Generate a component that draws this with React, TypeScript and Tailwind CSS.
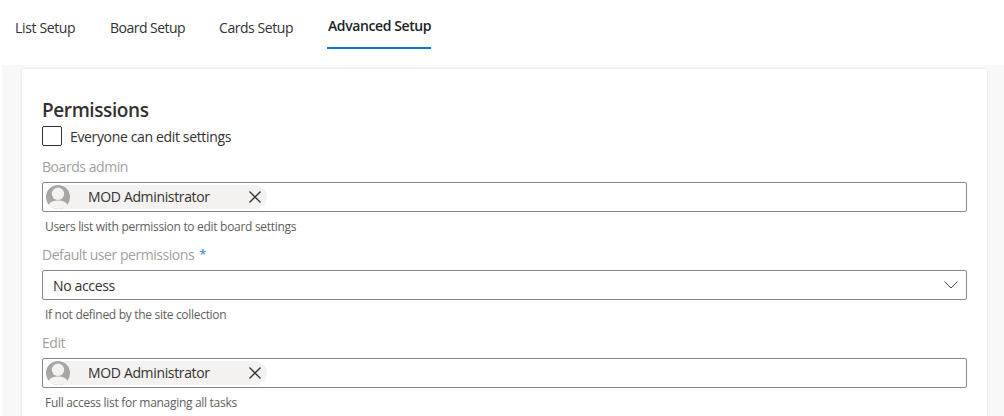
import React from "react";

const font = { fontFamily: '"Open Sans", "Noto Sans", sans-serif' };

function Avatar() {
  return (
    <svg width="24" height="24" viewBox="0 0 24 24" className="shrink-0">
      <circle cx="12" cy="12" r="12" fill="#a8a6a4" />
      <circle cx="12" cy="8.8" r="6.2" fill="#f3f2f1" />
      <path d="M2.6 20 C4 16.5 8 15.5 12 15.5 C16 15.5 20 16.5 21.4 20 C19.2 22.5 15.8 24 12 24 C8.2 24 4.8 22.5 2.6 20 Z" fill="#f3f2f1" />
    </svg>
  );
}

function Persona() {
  return (
    <div className="flex h-6 w-[221px] items-center rounded-full bg-[#f3f2f1]">
      <Avatar />
      <span className="ml-[18px] w-[161px] whitespace-nowrap pb-[2px] text-[14px] tracking-[-0.35px] text-[#323130]">MOD Administrator</span>
      <svg width="12" height="12" viewBox="0 0 12 12" className="shrink-0" fill="none" stroke="#323130" strokeWidth="1.3">
        <path d="M0.5 0.5 L11.5 11.5 M11.5 0.5 L0.5 11.5" />
      </svg>
    </div>
  );
}

function Label({ children, required }: { children: React.ReactNode; required?: boolean }) {
  return (
    <div className="flex h-[30px] items-center pb-[1px] text-[14px] tracking-[-0.45px] text-[#a19f9d]">
      {children}
      {required && <span className="ml-[5px] text-[13px] text-[#2f7fd0]">*</span>}
    </div>
  );
}

function Hint({ children }: { children: React.ReactNode }) {
  return (
    <div className="flex h-[28px] items-center pl-[3px] pt-[1px] text-[12px] tracking-[-0.3px] text-[#605e5c]">{children}</div>
  );
}

function PeopleField() {
  return (
    <div className="flex h-[30px] items-center rounded-[2px] border border-[#8a8886] pl-[3px]">
      <Persona />
    </div>
  );
}

export default function App() {
  return (
    <div className="h-[416px] w-[1004px] overflow-hidden bg-white" style={font}>
      <div className="flex h-[65px] pl-[15px]">
        <div className="flex h-[49px] whitespace-nowrap text-[14px] text-[#323130]">
          <div className="flex w-[95px] items-center pt-[6px] tracking-[-0.35px]">List Setup</div>
          <div className="flex w-[109px] items-center pt-[6px] tracking-[-0.52px]">Board Setup</div>
          <div className="flex w-[108px] items-center pt-[6px] tracking-[-0.44px]">Cards Setup</div>
          <div className="flex w-[104px] items-center border-b-2 border-[#0078d4] pl-[1px] pt-[4px] font-semibold tracking-[-0.4px] text-[#201f1e]">
            Advanced Setup
          </div>
        </div>
      </div>
      <div className="ml-[2px] h-[351px] bg-[#f8f8f8] pl-[20px] pr-[17px] pt-[4px]">
        <div className="h-[400px] rounded-[2px] bg-white px-[20px] pt-[26px] shadow-[0_0_3px_rgba(0,0,0,0.12)]">
          <div className="flex h-[30px] items-center text-[19px] font-semibold tracking-[-0.4px] text-[#323130]">
            Permissions
          </div>
          <div className="flex h-[22px] items-center">
            <div className="h-5 w-5 rounded-[2px] border border-[#323130] bg-white" />
            <span className="ml-2 text-[14px] tracking-[-0.35px] text-[#323130]">Everyone can edit settings</span>
          </div>
          <div className="mt-[5px]">
            <Label>Boards admin</Label>
            <PeopleField />
            <Hint>Users list with permission to edit board settings</Hint>
          </div>
          <div>
            <Label required>Default user permissions</Label>
            <div className="flex h-[30px] items-center justify-between rounded-[2px] border border-[#8a8886] pl-[10px] pr-[8px] text-[14px] tracking-[-0.35px] text-[#323130]">
              No access
              <svg width="14" height="8" viewBox="0 0 14 8" fill="none" stroke="#484644" strokeWidth="1">
                <path d="M0.5 0.5 L7 7 L13.5 0.5" />
              </svg>
            </div>
            <Hint>If not defined by the site collection</Hint>
          </div>
          <div>
            <Label>Edit</Label>
            <PeopleField />
            <Hint>Full access list for managing all tasks</Hint>
          </div>
        </div>
      </div>
    </div>
  );
}
